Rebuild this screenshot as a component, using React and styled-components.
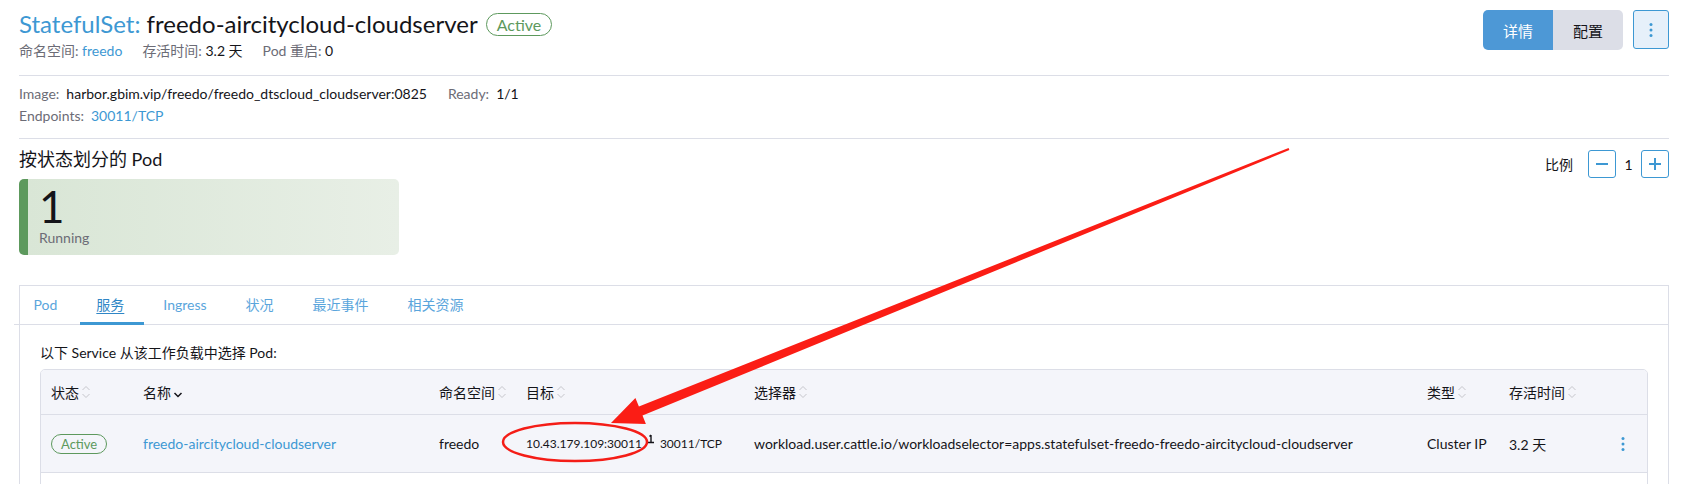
import React from 'react'
import styled, { createGlobalStyle } from 'styled-components'

const BLUE = '#3d98d3'
const GREEN = '#5d995d'
const LINE = '#dcdee7'
const MUTED = '#6c6c76'

const GlobalStyle = createGlobalStyle`
	html, body { margin: 0; padding: 0; background: #fff; }
	body {
		font-family: Lato, "Noto Sans CJK SC", sans-serif;
		font-size: 14px;
		color: #141419;
	}
	* { box-sizing: border-box; }
`

const Page = styled.div`
	position: relative;
	width: 1689px;
	height: 484px;
	overflow: hidden;
	padding: 9px 20px 0 19px;
`

const Masthead = styled.header`
	display: flex;
	justify-content: space-between;
	align-items: flex-start;
`

const Title = styled.h1`
	margin: 0;
	display: flex;
	align-items: center;
	font-size: 24px;
	font-weight: 400;
	line-height: 30px;
	white-space: pre;
`

const TypeLabel = styled.span`
	color: ${BLUE};
`

const StateBadge = styled.span`
	display: inline-block;
	margin-left: 8px;
	border: 1px solid ${GREEN};
	border-radius: ${p => (p.$small ? '10px' : '12px')};
	color: ${GREEN};
	font-size: ${p => (p.$small ? '13px' : '16px')};
	line-height: ${p => (p.$small ? '18px' : '21px')};
	padding: ${p => (p.$small ? '0 9px' : '0 10px')};
	${p => p.$small && 'margin-left: 0;'}
`

const SubLine = styled.div`
	display: flex;
	gap: 20px;
	margin-top: 2px;
	line-height: 20px;
	font-size: 14px;
`

const Meta = styled.span`
	color: ${MUTED};
	& b {
		font-weight: 400;
		color: ${p => (p.$link ? BLUE : '#141419')};
	}
`

const Actions = styled.div`
	display: flex;
	align-items: flex-start;
	margin-top: 1px;
`

const Segment = styled.div`
	display: flex;
	border-radius: 5px;
	overflow: hidden;
`

const SegButton = styled.button`
	width: 70px;
	height: 40px;
	border: 0;
	font-family: inherit;
	font-size: 15px;
	background: ${p => (p.$active ? '#4d98d6' : '#dcdee7')};
	color: ${p => (p.$active ? '#fff' : '#141419')};
`

const KebabButton = styled.button`
	margin-left: 10px;
	width: 36px;
	height: 39px;
	border: 1px solid ${BLUE};
	border-radius: 3px;
	background: #e6f0fa;
	display: flex;
	align-items: center;
	justify-content: center;
	padding: 0;
`

const Divider = styled.div`
	height: 1px;
	background: ${LINE};
	margin-top: ${p => p.$top || 0}px;
`

const Info = styled.div`
	padding-top: 7px;
`

const InfoRow = styled.div`
	display: flex;
	gap: 21px;
	line-height: 22px;
`

const InfoItem = styled.span`
	display: flex;
	gap: 7px;
	color: ${MUTED};
	& b {
		font-weight: 400;
		color: ${p => (p.$link ? BLUE : '#141419')};
	}
`

const SectionRow = styled.div`
	display: flex;
	justify-content: space-between;
	align-items: flex-start;
	margin-top: 8px;
`

const SectionTitle = styled.h3`
	margin: 0;
	font-size: 18px;
	font-weight: 400;
	line-height: 24px;
`

const Scale = styled.div`
	display: flex;
	align-items: center;
	margin-top: 3px;
	font-size: 14px;
`

const ScaleLabel = styled.span`
	margin-right: 15px;
`

const ScaleValue = styled.span`
	width: 25px;
	text-align: center;
`

const ScaleButton = styled.button`
	width: 28px;
	height: 28px;
	padding: 0;
	border: 1px solid ${BLUE};
	border-radius: 3px;
	background: #fff;
	display: flex;
	align-items: center;
	justify-content: center;
`

const CountCard = styled.div`
	margin-top: 8px;
	width: 380px;
	height: 76px;
	border-radius: 5px;
	border-left: 9px solid ${GREEN};
	background: linear-gradient(to right, #d9e6d6, #e8efe6);
	padding: 4px 0 0 11px;
`

const CountNumber = styled.div`
	font-size: 44px;
	line-height: 46px;
`

const CountLabel = styled.div`
	color: ${MUTED};
	font-size: 14px;
	line-height: 18px;
`

const Panel = styled.section`
	margin-top: 30px;
	border: 1px solid ${LINE};
	border-bottom: 0;
	height: 220px;
`

const TabBar = styled.nav`
	display: flex;
	height: 39px;
	padding-left: 0;
	margin-left: -6px;
	border-bottom: 1px solid ${LINE};
`

const Tab = styled.span`
	position: relative;
	padding: 0 19.5px;
	line-height: 38px;
	font-size: 14px;
	color: ${p => (p.$active ? '#2f86c6' : '#5aa5dc')};
	text-decoration: ${p => (p.$active ? 'underline' : 'none')};
	text-underline-offset: 3px;
	&::after {
		content: '';
		display: ${p => (p.$active ? 'block' : 'none')};
		position: absolute;
		left: 3px;
		right: 0;
		bottom: -1px;
		height: 3px;
		background: ${BLUE};
	}
`

const PanelBody = styled.div`
	padding: 18px 20px 0 20px;
`

const Note = styled.p`
	margin: 0;
	line-height: 20px;
	font-size: 14px;
`

const Table = styled.div`
	margin-top: 6px;
	border: 1px solid ${LINE};
	border-radius: 5px 5px 0 0;
	overflow: hidden;
`

const Row = styled.div`
	display: grid;
	grid-template-columns: 92px 296px 87px 228px 1fr 82px 100px 48px;
	align-items: center;
	height: ${p => p.$h}px;
	background: ${p => (p.$plain ? '#fff' : '#f4f5fa')};
	border-bottom: 1px solid ${LINE};
`

const Cell = styled.div`
	padding-left: ${p => (p.$center ? 0 : 10)}px;
	display: flex;
	align-items: center;
	justify-content: ${p => (p.$center ? 'center' : 'flex-start')};
	font-size: ${p => p.$size || 14}px;
	color: ${p => (p.$link ? BLUE : '#141419')};
	white-space: nowrap;
`

const Port = styled.span`
	font-size: 12px;
	margin-left: 5px;
`

const Overlay = styled.svg`
	position: absolute;
	left: 0;
	top: 0;
	pointer-events: none;
`

const SortIcon = ({ active }) => (
	<svg width="10" height="16" viewBox="0 0 10 16" style={{ marginLeft: 2 }}>
		{!active && <path d="M1.5 6 L5 2.5 L8.5 6" fill="none" stroke="#c6c6cc" strokeWidth="1" />}
		<path
			d={active ? 'M1.5 9 L5 12.5 L8.5 9' : 'M1.5 10 L5 13.5 L8.5 10'}
			fill="none"
			stroke={active ? '#141419' : '#c6c6cc'}
			strokeWidth={active ? 1.5 : 1}
		/>
	</svg>
)

const Dots = () => (
	<svg width="4" height="16" viewBox="0 0 4 16">
		<circle cx="2" cy="2.5" r="1.5" fill={BLUE} />
		<circle cx="2" cy="8" r="1.5" fill={BLUE} />
		<circle cx="2" cy="13.5" r="1.5" fill={BLUE} />
	</svg>
)

const PortGlyph = () => (
	<svg width="8" height="14" viewBox="0 0 8 14" style={{ marginLeft: 5, marginTop: -6 }}>
		<path d="M4 1 V8 M2.5 2.5 L4 1 M1 8.5 H7" fill="none" stroke="#141419" strokeWidth="1.4" />
	</svg>
)

// red annotation drawn over the screenshot: tapered arrow + ellipse
const arrowPoints = () => {
	const tail = [1289, 149]
	const tip = [611, 423]
	const dx = tip[0] - tail[0]
	const dy = tip[1] - tail[1]
	const len = Math.hypot(dx, dy)
	const u = [dx / len, dy / len]
	const n = [-u[1], u[0]]
	const head = 32
	const b = [tip[0] - u[0] * head, tip[1] - u[1] * head]
	const at = (p, w) => [p[0] + n[0] * w, p[1] + n[1] * w]
	const pts = [at(tail, -1.2), at(b, -4.8), at(b, -14), tip, at(b, 14), at(b, 4.8), at(tail, 1.2)]
	return pts.map(p => p.map(v => v.toFixed(1)).join(',')).join(' ')
}

const columns = [
	{ label: '状态' },
	{ label: '名称', active: true },
	{ label: '命名空间' },
	{ label: '目标' },
	{ label: '选择器' },
	{ label: '类型' },
	{ label: '存活时间' },
]

const tabs = ['Pod', '服务', 'Ingress', '状况', '最近事件', '相关资源']

export default function App() {
	return (
		<Page>
			<GlobalStyle />
			<Masthead>
				<div>
					<Title>
						<TypeLabel>StatefulSet:</TypeLabel> freedo-aircitycloud-cloudserver
						<StateBadge>Active</StateBadge>
					</Title>
					<SubLine>
						<Meta $link>
							命名空间: <b>freedo</b>
						</Meta>
						<Meta>
							存活时间: <b>3.2 天</b>
						</Meta>
						<Meta>
							Pod 重启: <b>0</b>
						</Meta>
					</SubLine>
				</div>
				<Actions>
					<Segment>
						<SegButton $active>详情</SegButton>
						<SegButton>配置</SegButton>
					</Segment>
					<KebabButton>
						<Dots />
					</KebabButton>
				</Actions>
			</Masthead>

			<Divider $top={14} />
			<Info>
				<InfoRow>
					<InfoItem>
						Image: <b>harbor.gbim.vip/freedo/freedo_dtscloud_cloudserver:0825</b>
					</InfoItem>
					<InfoItem>
						Ready: <b>1/1</b>
					</InfoItem>
				</InfoRow>
				<InfoRow>
					<InfoItem $link>
						Endpoints: <b>30011/TCP</b>
					</InfoItem>
				</InfoRow>
			</Info>
			<Divider $top={11} />

			<SectionRow>
				<div>
					<SectionTitle>按状态划分的 Pod</SectionTitle>
					<CountCard>
						<CountNumber>1</CountNumber>
						<CountLabel>Running</CountLabel>
					</CountCard>
				</div>
				<Scale>
					<ScaleLabel>比例</ScaleLabel>
					<ScaleButton>
						<svg width="14" height="14" viewBox="0 0 14 14">
							<path d="M1 7 H13" stroke={BLUE} strokeWidth="2" />
						</svg>
					</ScaleButton>
					<ScaleValue>1</ScaleValue>
					<ScaleButton>
						<svg width="14" height="14" viewBox="0 0 14 14">
							<path d="M1 7 H13 M7 1 V13" stroke={BLUE} strokeWidth="2" />
						</svg>
					</ScaleButton>
				</Scale>
			</SectionRow>

			<Panel>
				<TabBar>
					{tabs.map(t => (
						<Tab key={t} $active={t === '服务'}>
							{t}
						</Tab>
					))}
				</TabBar>
				<PanelBody>
					<Note>以下 Service 从该工作负载中选择 Pod:</Note>
					<Table>
						<Row $h={45}>
							{columns.map(c => (
								<Cell key={c.label}>
									{c.label}
									<SortIcon active={c.active} />
								</Cell>
							))}
							<Cell />
						</Row>
						<Row $h={58}>
							<Cell>
								<StateBadge $small>Active</StateBadge>
							</Cell>
							<Cell $link>freedo-aircitycloud-cloudserver</Cell>
							<Cell>freedo</Cell>
							<Cell $size={12}>
								10.43.179.109:30011
								<PortGlyph />
								<Port>30011/TCP</Port>
							</Cell>
							<Cell>workload.user.cattle.io/workloadselector=apps.statefulset-freedo-freedo-aircitycloud-cloudserver</Cell>
							<Cell>Cluster IP</Cell>
							<Cell>3.2 天</Cell>
							<Cell $center>
								<Dots />
							</Cell>
						</Row>
						<Row $h={40} $plain />
					</Table>
				</PanelBody>
			</Panel>

			<Overlay width="1689" height="484" viewBox="0 0 1689 484">
				<polygon points={arrowPoints()} fill="#fb1d15" />
				<ellipse cx="575" cy="442" rx="72" ry="19" fill="none" stroke="#f41d17" strokeWidth="2.5" />
			</Overlay>
		</Page>
	)
}
